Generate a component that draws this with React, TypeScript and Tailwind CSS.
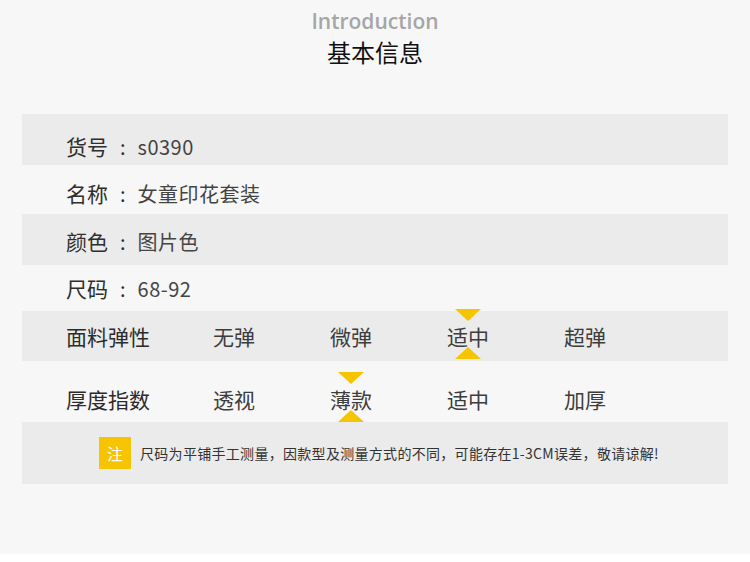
import React from "react";

const cjk = { fontFamily: '"Noto Sans CJK SC", "Noto Sans", sans-serif' };

function TriDown() {
  return (
    <svg width="26" height="12" viewBox="0 0 26 12" className="block">
      <polygon points="0,0 26,0 13,12" fill="#f6c400" />
    </svg>
  );
}
function TriUp() {
  return (
    <svg width="26" height="12" viewBox="0 0 26 12" className="block">
      <polygon points="0,12 26,12 13,0" fill="#f6c400" />
    </svg>
  );
}

function Scale({
  label,
  options,
  selected,
  rowClass,
}: {
  label: string;
  options: string[];
  selected: number;
  rowClass: string;
}) {
  return (
    <div className={`relative flex items-center ${rowClass}`}>
      <div className="w-[191px] pl-[44px] text-[21px] leading-[22px] text-[#2b2b2b]">{label}</div>
      {options.map((o, i) => (
        <div key={o} className="relative flex w-[117px] items-center">
          <span className="relative block text-[21px] leading-[22px] text-[#3d3d3d]">
            {o}
            {i === selected && (
              <>
                <span className="absolute left-1/2 top-[-16px] -translate-x-1/2">
                  <TriDown />
                </span>
                <span className="absolute left-1/2 bottom-[-12px] -translate-x-1/2">
                  <TriUp />
                </span>
              </>
            )}
          </span>
        </div>
      ))}
    </div>
  );
}

function Field({ k, v, cls }: { k: string; v: string; cls: string }) {
  return (
    <div className={`flex items-center pl-[44px] text-[21px] text-[#2e2e2e] ${cls}`}>
      <span>{k}</span>
      <span className="ml-[12px] mr-[12px] text-[20px]">:</span>
      <span className="text-[20px] tracking-[0.5px] text-[#444]">{v}</span>
    </div>
  );
}

export default function App() {
  return (
    <div className="w-[750px] bg-white" style={cjk}>
      <div className="flex h-[554px] flex-col bg-[#f7f7f7]">
        <div className="flex flex-col items-center pt-[6px]">
          <div
            className="text-[21px] font-semibold leading-[30px] text-[#a6a6a6]"
            style={{ fontFamily: '"Open Sans", sans-serif' }}
          >
            Introduction
          </div>
          <div className="text-[24px] leading-[32px] text-[#111]">基本信息</div>
        </div>
        <div className="mx-[22px] mt-[46px] flex flex-col">
          <Field k="货号" v="s0390" cls="h-[51px] pt-[14px] bg-[#ebebeb]" />
          <Field k="名称" v="女童印花套装" cls="h-[49px] pt-[8px]" />
          <Field k="颜色" v="图片色" cls="h-[51px] pt-[5px] bg-[#ebebeb]" />
          <Field k="尺码" v="68-92" cls="h-[46px] pt-[2px]" />
          <Scale
            label="面料弹性"
            options={["无弹", "微弹", "适中", "超弹"]}
            selected={2}
            rowClass="h-[50px] bg-[#ebebeb]"
          />
          <Scale
            label="厚度指数"
            options={["透视", "薄款", "适中", "加厚"]}
            selected={1}
            rowClass="h-[61px] pt-[15px]"
          />
          <div className="flex h-[62px] items-center bg-[#ebebeb] pl-[77px]">
            <div className="flex h-[32px] w-[32px] items-center justify-center bg-[#f6c400] text-[16px] text-white">
              注
            </div>
            <div className="ml-[9px] text-[14px] tracking-[0.3px] text-[#333]">
              尺码为平铺手工测量，因款型及测量方式的不同，可能存在1-3CM误差，敬请谅解!
            </div>
          </div>
        </div>
      </div>
    </div>
  );
}
